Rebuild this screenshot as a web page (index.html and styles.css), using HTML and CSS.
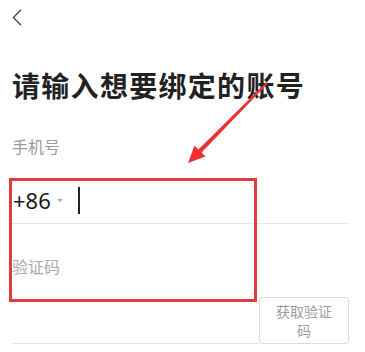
FILE: index.html
```html
<!DOCTYPE html>
<html lang="zh-CN">
<head>
<meta charset="utf-8">
<title>绑定账号</title>
<link rel="stylesheet" href="styles.css">
</head>
<body>
<div class="page">
  <div class="nav">
    <svg class="back" width="10" height="17" viewBox="0 0 10 17"><path d="M9 0.8 L1.4 8.5 L9 16.2" fill="none" stroke="#444" stroke-width="1.3"/></svg>
  </div>
  <h1 class="title">请输入想要绑定的账号</h1>
  <div class="label">手机号</div>
  <div class="phone-row">
    <span class="code">+86</span>
    <span class="caret"></span>
    <span class="cursor"></span>
  </div>
  <div class="code-row">
    <div class="code-field"><span class="placeholder">验证码</span></div>
    <button class="get-code">获取验证码</button>
  </div>

  <div class="mark-box"></div>
  <svg class="arrow" width="365" height="352" viewBox="0 0 365 352">
    <polygon points="266.3,82.3 267.7,83.7 201.6,152.6 205.5,156.5 188,163 194.5,145.5 198.4,149.4" fill="#ec3232"/>
  </svg>
</div>
</body>
</html>
```
FILE: styles.css
```css
html, body {
  margin: 0;
  padding: 0;
  background: #fff;
}
body {
  font-family: "Noto Sans", "Noto Sans CJK SC", sans-serif;
  width: 365px;
  height: 352px;
  overflow: hidden;
}
.page {
  position: relative;
  padding: 0 16px 0 12px;
  height: 352px;
  box-sizing: border-box;
}
.nav {
  height: 40px;
  padding-top: 9px;
  box-sizing: border-box;
}
.back {
  display: block;
}
.title {
  margin: 31px 0 0;
  font-size: 28px;
  line-height: 28px;
  font-weight: 700;
  color: #222;
  letter-spacing: 1.3px;
  font-family: "Noto Sans CJK SC", sans-serif;
  white-space: nowrap;
}
.label {
  margin-top: 39px;
  font-size: 16px;
  line-height: 16px;
  color: #9a9a9a;
  font-family: "Noto Sans CJK SC", sans-serif;
}
.phone-row {
  margin-top: 23px;
  height: 46px;
  display: flex;
  align-items: center;
  border-bottom: 1px solid #e6e6e6;
}
.code {
  font-size: 22px;
  line-height: 22px;
  color: #1a1a1a;
  margin-left: 1px;
}
.caret {
  width: 0;
  height: 0;
  border-left: 3px solid transparent;
  border-right: 3px solid transparent;
  border-top: 3px solid #aaa;
  margin-left: 6px;
}
.cursor {
  width: 2px;
  height: 27px;
  background: #222;
  margin-left: 15px;
}
.code-row {
  display: flex;
  align-items: flex-end;
}
.code-field {
  flex: 1;
  height: 120px;
  padding-top: 34px;
  box-sizing: border-box;
  border-bottom: 1px solid #e6e6e6;
}
.placeholder {
  display: block;
  font-size: 16px;
  line-height: 16px;
  color: #ababab;
  font-family: "Noto Sans CJK SC", sans-serif;
}
.get-code {
  width: 90px;
  height: 47px;
  margin-bottom: 0;
  padding: 0 15px;
  border: 1px solid #dcdcdc;
  border-radius: 3px;
  background: #fff;
  font-family: "Noto Sans CJK SC", sans-serif;
  font-size: 14px;
  line-height: 19px;
  color: #9c9c9c;
  text-align: center;
  box-sizing: border-box;
}
.mark-box {
  position: absolute;
  left: 9px;
  top: 178px;
  width: 248px;
  height: 124px;
  border: 3px solid #e03c40;
  box-sizing: border-box;
}
.arrow {
  position: absolute;
  left: 0;
  top: 0;
  pointer-events: none;
}
```
